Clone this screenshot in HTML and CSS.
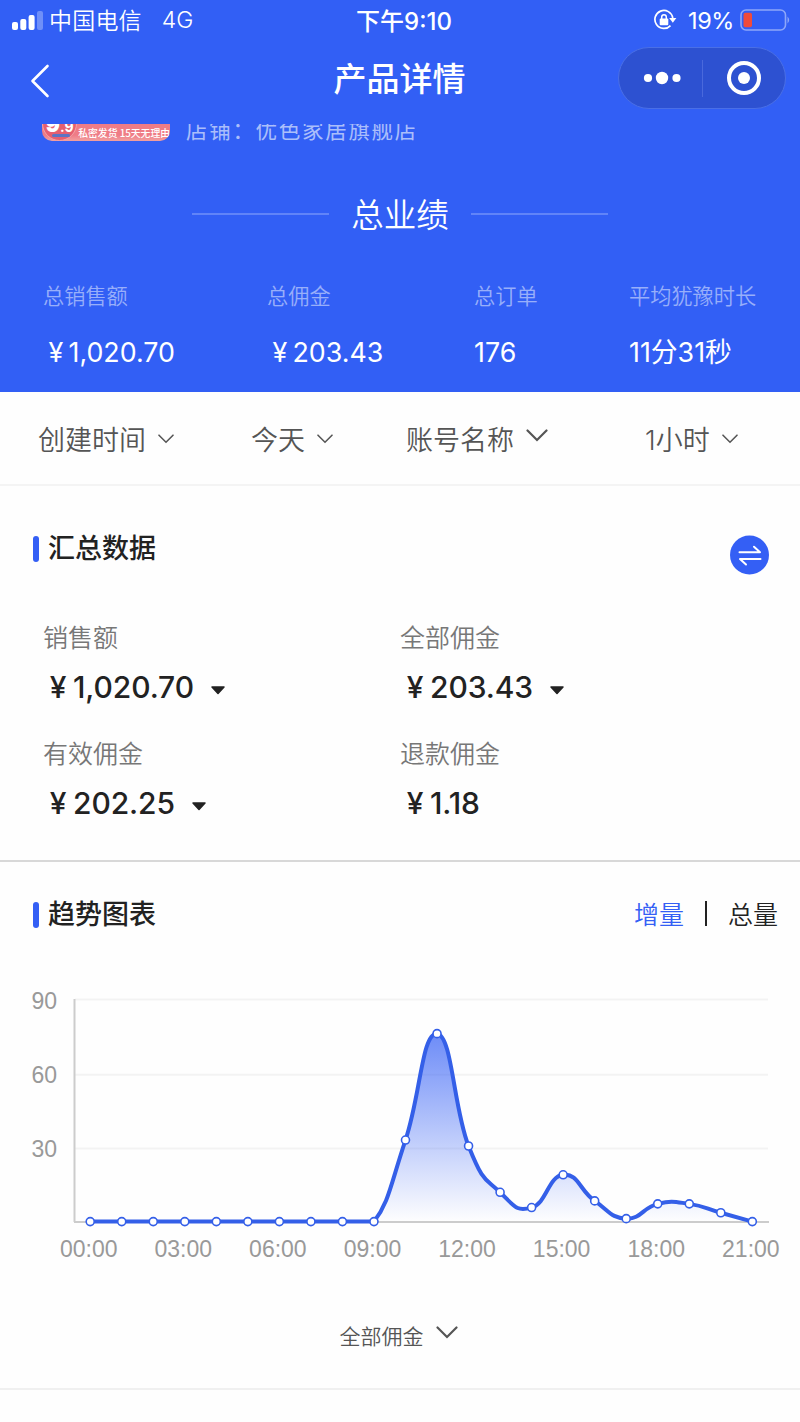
FILE: index.html
```html
<!DOCTYPE html>
<html lang="zh-CN">
<head>
    <meta charset="UTF-8">
    <title>产品详情</title>
    <link rel="stylesheet" href="styles.css">
</head>
<body>

    <header class="top">
        <div class="status-bar">
            <svg class="signal" width="31" height="20" viewBox="0 0 31 20" fill="#fff">
                <rect x="0" y="12" width="6" height="8" rx="2"/>
                <rect x="8.3" y="9" width="6" height="11" rx="2"/>
                <rect x="16.6" y="5" width="6" height="15" rx="2"/>
                <rect x="25" y="1" width="6" height="19" rx="2" opacity="0.3"/>
            </svg>
            <span class="carrier">中国电信</span>
            <span class="network">4G</span>
            <span class="time">下午9:10</span>
            <svg class="lock" width="24" height="22" viewBox="0 0 24 22" fill="none" stroke="#fff" stroke-width="1.7">
                <path d="M17.5 16.6A9 9 0 1 1 19.8 9"/>
                <path d="M16.2 9h7.2l-3.6 4.8z" fill="#fff" stroke="none"/>
                <rect x="6.7" y="9.6" width="8.6" height="6.6" rx="1" fill="#fff" stroke="none"/>
                <path d="M8.7 10V8a2.3 2.3 0 0 1 4.6 0v2" stroke-width="1.5"/>
            </svg>
            <span class="percent">19%</span>
            <svg class="battery" width="51" height="22" viewBox="0 0 51 22">
                <rect x="1" y="1" width="44.5" height="20" rx="5" fill="none" stroke="#fff" stroke-opacity="0.45" stroke-width="1.6"/>
                <rect x="3.5" y="3.8" width="8.5" height="14.4" rx="2" fill="#f04a3a"/>
                <path d="M47.5 7.5q3.4 3.5 0 7z" fill="#fff" opacity="0.45"/>
            </svg>
        </div>

        <div class="nav-bar">
            <svg class="back" width="20" height="34" viewBox="0 0 20 34" fill="none" stroke="#fff" stroke-width="2.6" stroke-linecap="round" stroke-linejoin="round">
                <path d="M17.5 2L2.5 17l15 15"/>
            </svg>
            <h1>产品详情</h1>
            <div class="capsule">
                <svg width="38" height="14" viewBox="0 0 38 14" fill="#fff">
                    <circle cx="5" cy="7" r="4.1"/>
                    <circle cx="19" cy="7" r="6.2"/>
                    <circle cx="33.5" cy="7" r="4.1"/>
                </svg>
                <span class="capsule-line"></span>
                <svg width="36" height="36" viewBox="0 0 36 36">
                    <circle cx="18" cy="18" r="15" fill="none" stroke="#fff" stroke-width="4"/>
                    <circle cx="18" cy="18" r="6" fill="#fff"/>
                </svg>
            </div>
        </div>

        <!-- scrolled under the nav bar -->
        <div class="product">
            <div class="thumb">
                <span class="thumb-price"><b>9</b>.9<i></i></span>
                <span class="thumb-text">私密发货 15天无理由</span>
            </div>
            <div class="shop"><span>店铺：</span><span>优色家居旗舰店</span></div>
        </div>

        <div class="total-title"><span></span><h2>总业绩</h2><span></span></div>

        <div class="totals">
            <div class="total">
                <p>总销售额</p>
                <strong><span class="yen">¥</span>1,020.70</strong>
            </div>
            <div class="total">
                <p>总佣金</p>
                <strong><span class="yen">¥</span>203.43</strong>
            </div>
            <div class="total">
                <p>总订单</p>
                <strong>176</strong>
            </div>
            <div class="total">
                <p>平均犹豫时长</p>
                <strong>11分31秒</strong>
            </div>
        </div>
    </header>

    <div class="filters">
        <div class="filter">创建时间<svg class="arrow" width="16" height="10" viewBox="0 0 16 10"><path d="M1 1.2l7 7 7-7"/></svg></div>
        <div class="filter">今天<svg class="arrow" width="16" height="10" viewBox="0 0 16 10"><path d="M1 1.2l7 7 7-7"/></svg></div>
        <div class="filter">账号名称<svg class="arrow arrow-big" width="22" height="13" viewBox="0 0 22 13"><path d="M1.5 1.5L11 11l9.5-9.5"/></svg></div>
        <div class="filter">1小时<svg class="arrow" width="16" height="10" viewBox="0 0 16 10"><path d="M1 1.2l7 7 7-7"/></svg></div>
    </div>

    <section class="summary">
        <div class="section-head">
            <h3>汇总数据</h3>
            <svg class="switch" width="40" height="40" viewBox="0 0 40 40" fill="none" stroke="#fff" stroke-width="2" stroke-linecap="round" stroke-linejoin="round">
                <circle cx="19.500" cy="20" r="19.5" fill="#345ff5" stroke="none"/>
                <path d="M9.500 17.200h20.500l-6-5.500M30.500 24H10l6 5.500"/>
            </svg>
        </div>
        <div class="cards">
            <div class="card">
                <p>销售额</p>
                <strong><span class="yen">¥</span>1,020.70<svg class="caret" width="16" height="9" viewBox="0 0 16 9"><path d="M2 1h12L8 7.5z"/></svg></strong>
            </div>
            <div class="card">
                <p>全部佣金</p>
                <strong><span class="yen">¥</span>203.43<svg class="caret" width="16" height="9" viewBox="0 0 16 9"><path d="M2 1h12L8 7.5z"/></svg></strong>
            </div>
            <div class="card">
                <p>有效佣金</p>
                <strong><span class="yen">¥</span>202.25<svg class="caret" width="16" height="9" viewBox="0 0 16 9"><path d="M2 1h12L8 7.5z"/></svg></strong>
            </div>
            <div class="card">
                <p>退款佣金</p>
                <strong><span class="yen">¥</span>1.18</strong>
            </div>
        </div>
    </section>

    <section class="trend">
        <div class="section-head">
            <h3>趋势图表</h3>
            <div class="tabs"><span class="active">增量</span><i></i><span>总量</span></div>
        </div>
        <svg id="chart" class="chart" width="800" height="300" viewBox="0 0 800 300">
            <defs>
                <linearGradient id="fill" x1="0" y1="53" x2="0" y2="242" gradientUnits="userSpaceOnUse">
                    <stop offset="0" stop-color="#345ff5" stop-opacity="0.72"/>
                    <stop offset="1" stop-color="#345ff5" stop-opacity="0"/>
                </linearGradient>
            </defs>
        </svg>
        <div class="picker">全部佣金<svg class="arrow arrow-big" width="22" height="13" viewBox="0 0 22 13"><path d="M1.5 1.5L11 11l9.5-9.5"/></svg></div>
    </section>

    <script>
        const data = [0, 0, 0, 0, 0, 0, 0, 0, 0, 0, 33.1, 76.3, 30.7, 11.9, 5.7, 19, 8.4, 1.2, 7.2, 7.2, 3.6, 0];
        const left = 90.2, step = 31.53, bottom = 241.6, unit = 2.463, tension = 0.24;
        const chart = document.getElementById('chart');

        function add(tag, cls, attrs, text) {
            const el = document.createElementNS('http://www.w3.org/2000/svg', tag);
            el.setAttribute('class', cls);
            for (const key in attrs) el.setAttribute(key, attrs[key]);
            if (text) el.textContent = text;
            chart.appendChild(el);
        }

        const points = data.map((v, i) => ({ x: left + i * step, y: bottom - v * unit }));

        // smooth curve, control points never go below the base line
        function curve() {
            let d = `M${points[0].x} ${points[0].y}`;
            for (let i = 0; i < points.length - 1; i++) {
                const p0 = points[Math.max(i - 1, 0)], p1 = points[i];
                const p2 = points[i + 1], p3 = points[Math.min(i + 2, points.length - 1)];
                const ax = p1.x + (p2.x - p0.x) * tension, ay = Math.min(p1.y + (p2.y - p0.y) * tension, bottom);
                const bx = p2.x - (p3.x - p1.x) * tension, by = Math.min(p2.y - (p3.y - p1.y) * tension, bottom);
                d += `C${ax} ${ay} ${bx} ${by} ${p2.x} ${p2.y}`;
            }
            return d;
        }

        [[90, 19.5, 28.8], [60, 94.8, 102.6], [30, 168.5, 176.6]].forEach(([label, y, textY]) => {
            add('line', 'grid', { x1: 75, x2: 768, y1: y, y2: y });
            add('text', 'tick', { x: 57, y: textY, 'text-anchor': 'end' }, label);
        });
        add('line', 'axis', { x1: 74.5, x2: 74.5, y1: 19, y2: 242 });
        add('line', 'axis', { x1: 74, x2: 769, y1: 242, y2: 242 });

        const line = curve();
        add('path', 'area', { d: line + `V${bottom}H${left}Z`, fill: 'url(#fill)' });
        add('path', 'line', { d: line });

        points.forEach((p, i) => {
            add('circle', 'dot', { cx: p.x, cy: p.y, r: 4 });
            if (i % 3 === 0) {
                add('text', 'tick', { x: p.x - 1.5, y: 276.5, 'text-anchor': 'middle' }, String(i).padStart(2, '0') + ':00');
            }
        });
    </script>
</body>
</html>
```

FILE: styles.css
```css
* {
    box-sizing: border-box;
}
body {
    margin: 0;
    width: 800px;
    height: 1422px;
    overflow: hidden;
    background: #fefefe;
    color: #222;
    font-family: Inter, "Noto Sans CJK SC", sans-serif;
    font-weight: 350;
}
h1, h2, h3, p {
    margin: 0;
}
.top {
    height: 392px;
    background: #325ff5;
    color: #fff;
}

/* status bar */
.status-bar {
    position: relative;
    display: flex;
    align-items: center;
    height: 40px;
    padding: 0 9px 0 12px;
    font-size: 23px;
}
.carrier {
    line-height: 34px;
    margin-top: 1px;
    letter-spacing: 0.2px;
}
.signal {
    margin: -1px 6px 0 0;
}
.network {
    margin-left: 20px;
}
.time {
    position: absolute;
    left: 0;
    right: 0;
    text-align: center;
    padding: 0 0 2px 8px;
    font-size: 24px;
    font-weight: 500;
}
.lock {
    margin-left: auto;
}
.percent {
    margin: 0 6px 0 11px;
    font-size: 23.5px;
    font-weight: 400;
    letter-spacing: -0.4px;
}

/* nav bar */
.nav-bar {
    display: grid;
    grid-template-columns: 1fr auto 1fr;
    align-items: center;
    height: 83px;
    padding: 0 14px 7px 30px;
}
.back {
    margin-top: 6px;
}
h1 {
    font-size: 33px;
    font-weight: 500;
    line-height: 40px;
    margin: 2px 0 0 -17px;
}
.capsule {
    display: flex;
    align-items: center;
    justify-self: end;
    width: 168px;
    height: 62px;
    padding: 0 23px 0 24px;
    border: 1px solid #4a6fe6;
    border-radius: 31px;
    background: #2d51d1;
}
.capsule-line {
    width: 1px;
    height: 37px;
    margin: 0 23px 0 21px;
    background: #4a69dc;
}

/* product */
.product {
    display: flex;
    align-items: flex-end;
    height: 19px;
    padding-left: 42px;
    margin-top: 1px;
    overflow: hidden;
}
.thumb {
    display: flex;
    align-items: flex-end;
    width: 128px;
    height: 40px;
    margin-bottom: 2px;
    border-radius: 10px;
    background: linear-gradient(#ef7c86 85%, #f2a0a0);
    overflow: hidden;
}
.thumb-price {
    position: relative;
    width: 36px;
    height: 36px;
    border: 1px solid #f3a3a8;
    border-radius: 18px;
    background: #e65f70;
    font-size: 14px;
    font-weight: 700;
    line-height: 38px;
    text-align: center;
}
.thumb-price b {
    font-size: 21px;
}
.thumb-price i {
    position: absolute;
    left: 9px;
    bottom: 3px;
    width: 18px;
    height: 3px;
    border-radius: 2px;
    background: #5d74c4;
}
.thumb-text {
    font-family: "Noto Sans CJK SC", sans-serif;
    font-size: 9.8px;
    font-weight: 500;
    line-height: 16px;
    white-space: nowrap;
    margin-left: 1px;
}
.shop {
    display: flex;
    margin: 0 0 1px 16px;
    font-size: 21.5px;
    font-weight: 400;
    line-height: 24px;
    letter-spacing: 1.7px;
    color: rgba(255, 255, 255, 0.6);
}

/* totals */
.total-title {
    display: flex;
    align-items: center;
    justify-content: center;
    gap: 22px;
    height: 48px;
    margin-top: 47px;
}
.total-title span {
    width: 137px;
    height: 2px;
    background: #6184f8;
}
h2 {
    font-size: 32.5px;
    font-weight: 350;
    margin-top: -3px;
}
.totals {
    display: grid;
    grid-template-columns: 224px 207px 155px auto;
    padding: 42px 0 0 43px;
}
.total p {
    font-size: 21.2px;
    line-height: 32px;
    color: rgba(255, 255, 255, 0.5);
}
.total strong {
    display: block;
    margin-top: 22px;
    font-size: 26.8px;
    font-weight: 370;
    line-height: 36px;
}
.yen {
    display: inline-block;
    width: 25.5px;
    text-align: center;
}

/* filters */
.filters {
    display: grid;
    grid-template-columns: 213px 155px 239px auto;
    align-items: center;
    height: 94px;
    padding-left: 38px;
    border-bottom: 2px solid #f4f4f4;
}
.filter {
    display: flex;
    align-items: center;
    font-size: 27px;
    color: #555;
}
.arrow {
    margin: 1px 0 0 12px;
    fill: none;
    stroke: #555;
    stroke-width: 1.6;
    stroke-linecap: round;
}
.arrow-big {
    margin-top: -5px;
    stroke-width: 2.2;
}

/* sections */
.section-head {
    display: flex;
    align-items: center;
    justify-content: space-between;
}
h3 {
    display: flex;
    align-items: center;
    font-size: 27px;
    font-weight: 500;
    line-height: 36px;
    margin-top: 2px;
}
h3::before {
    content: "";
    width: 6px;
    height: 26px;
    margin-right: 9px;
    border-radius: 3px;
    background: #345ff5;
}
.summary {
    height: 376px;
    padding: 44px 30px 0 33px;
    border-bottom: 2px solid #d8d8d8;
}
.summary .section-head {
    height: 36px;
}
.switch {
    margin-top: 14px;
}
.cards {
    display: grid;
    grid-template-columns: 357px auto;
    row-gap: 10px;
    padding: 51px 0 0 10px;
}
.card {
    height: 106px;
}
.card p {
    font-size: 25px;
    line-height: 42px;
    color: #777;
}
.card strong {
    display: flex;
    align-items: center;
    margin-top: 8px;
    font-size: 30px;
    font-weight: 550;
    line-height: 40px;
    letter-spacing: -0.1px;
}
.card .yen {
    width: 30px;
}
.caret {
    margin: 6px 0 0 16px;
    fill: #222;
    stroke: #222;
    stroke-width: 1.5;
    stroke-linejoin: round;
}

/* trend */
.trend {
    height: 528px;
    padding-top: 34px;
    border-bottom: 2px solid #f0f0f0;
}
.trend .section-head {
    height: 36px;
    padding: 0 22px 0 33px;
}
.tabs {
    display: flex;
    align-items: center;
    margin-top: -3px;
    font-size: 25px;
    color: #222;
}
.tabs .active {
    color: #345ff5;
}
.tabs i {
    width: 2px;
    height: 25px;
    margin: 2px 21px 0;
    background: #222;
}
.chart {
    display: block;
    margin-top: 48px;
}
.grid {
    stroke: #f3f3f3;
    stroke-width: 2;
}
.axis {
    stroke: #ccc;
    stroke-width: 2;
}
.line {
    fill: none;
    stroke: #345fe8;
    stroke-width: 4;
}
.dot {
    fill: #fff;
    stroke: #345fe8;
    stroke-width: 1.6;
}
.tick {
    font-family: "Liberation Sans", Arial, sans-serif;
    font-size: 23px;
    fill: #999;
}
.picker {
    display: flex;
    align-items: center;
    justify-content: center;
    height: 36px;
    margin: 37px 3px 0 0;
    font-size: 21px;
    color: #555;
}
```
